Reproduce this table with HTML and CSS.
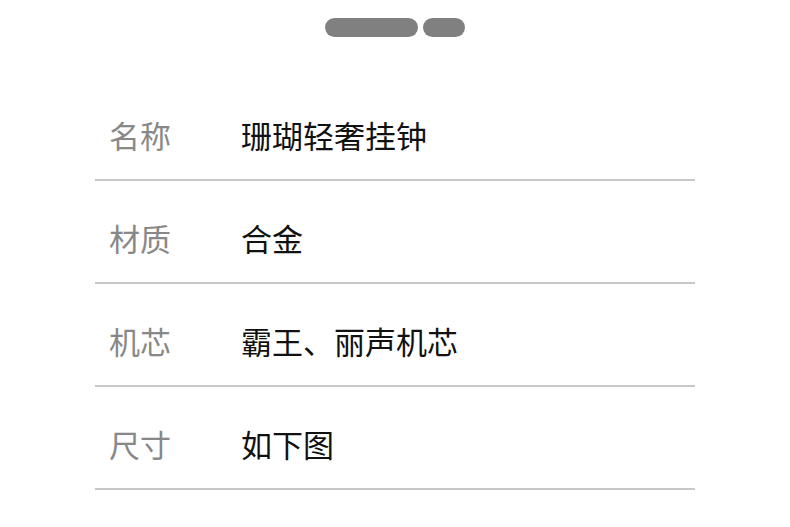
FILE: index.html
```html
<!DOCTYPE html>
<html lang="zh-CN">
<head>
<meta charset="utf-8">
<link rel="stylesheet" href="styles.css">
</head>
<body>
<div class="handle">
  <span class="pill pill-long"></span>
  <span class="pill pill-short"></span>
</div>
<div class="list">
  <div class="row"><span class="label">名称</span><span class="value">珊瑚轻奢挂钟</span></div>
  <div class="row"><span class="label">材质</span><span class="value">合金</span></div>
  <div class="row"><span class="label">机芯</span><span class="value">霸王、丽声机芯</span></div>
  <div class="row"><span class="label">尺寸</span><span class="value">如下图</span></div>
</div>
</body>
</html>
```
FILE: styles.css
```css
html, body {
  margin: 0;
  padding: 0;
  background: #ffffff;
  font-family: "Noto Sans CJK SC", "Noto Sans", sans-serif;
}
.handle {
  display: flex;
  justify-content: center;
  gap: 5px;
  padding-top: 18px;
}
.pill {
  display: block;
  height: 19px;
  border-radius: 10px;
  background: #808080;
}
.pill-long { width: 93px; }
.pill-short { width: 42px; }
.list {
  width: 600px;
  margin: 41px auto 0;
}
.row {
  display: flex;
  align-items: center;
  padding: 41px 0 29px 14px;
  border-bottom: 2px solid #c8c8c8;
  font-size: 31px;
  line-height: 31px;
}
.label {
  width: 132px;
  color: #888888;
}
.value {
  color: #111111;
}
```
